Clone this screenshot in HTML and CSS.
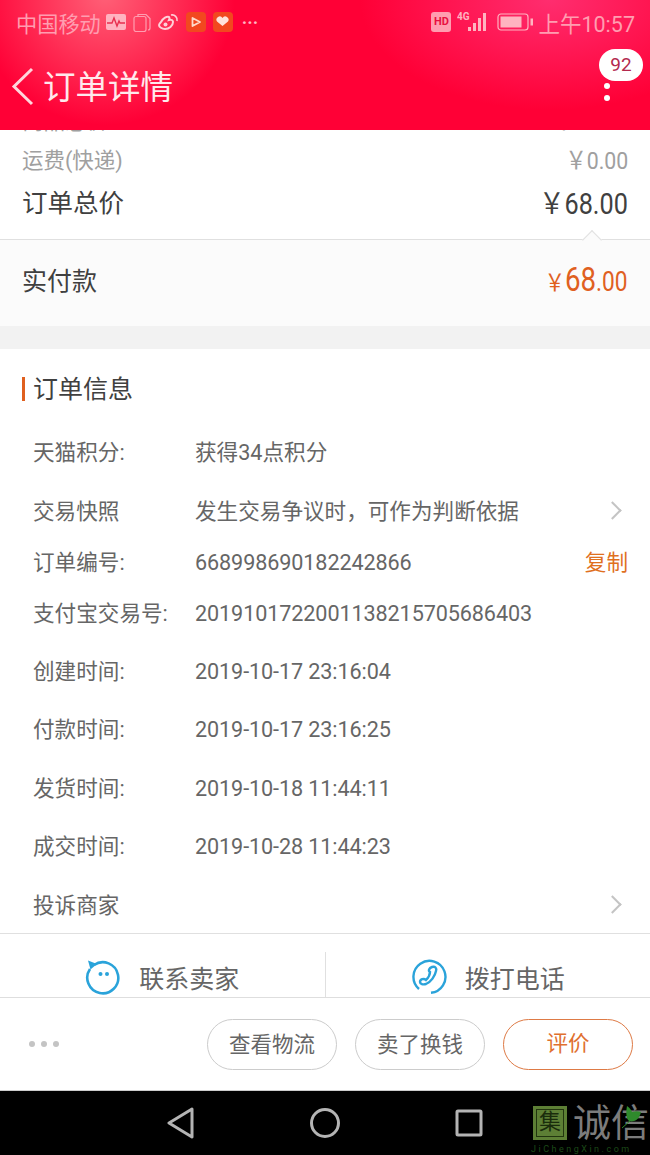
FILE: index.html
```html
<!DOCTYPE html>
<html lang="zh-CN">
<head>
<meta charset="UTF-8" />
<meta name="viewport" content="width=device-width, initial-scale=1" />
<title>订单详情</title>
<link rel="stylesheet" href="styles.css">
</head>
<body>
  <header class="top">
    <div class="status">
      <div class="status-left">
        <span>中国移动</span>
        <svg class="ico-pulse" width="20" height="16" viewBox="0 0 20 16"><rect width="20" height="16" rx="2" fill="#ffb3c0"/><path d="M1 9h5l2-5 3 8 2-5 1 2h5" fill="none" stroke="#e8304f" stroke-width="1.4"/></svg>
        <svg width="18" height="19" viewBox="0 0 18 19" fill="none" stroke="#ff9db0" stroke-width="1.2"><path d="M5 3V1.500h8l4 4V15a2 2 0 0 1-2 2"/><rect x="1" y="3.500" width="12" height="15" rx="2"/></svg>
        <svg width="21" height="18" viewBox="0 0 21 18" fill="none" stroke="#ffd0d8" stroke-width="2"><path d="M3 9c2-4 6-6 8-5 1 1 0 3 0 3s4-1 4 2c0 4-4 7-8 7-3 0-6-2-6-4 0-1 1-2 2-3z"/><circle cx="7.500" cy="11.500" r="2" fill="#ffd0d8" stroke="none"/><path d="M13 2a5 5 0 0 1 6 6" stroke-width="1.600"/></svg>
        <span class="app-badge"><svg width="12" height="12" viewBox="0 0 12 12" fill="none" stroke="#ffd9c9" stroke-width="1.800" stroke-linejoin="round"><path d="M2.500 2 10 6l-7.500 4z"/></svg></span>
        <span class="app-badge"><svg width="13" height="12" viewBox="0 0 13 12" fill="#ffe3dc"><path d="M6.500 10 1 5.500A3 3 0 0 1 6.500 2 3 3 0 0 1 12 5.500z"/></svg></span>
        <span class="more-dots">···</span>
      </div>
      <div class="status-right">
        <span class="hd">HD</span>
        <svg width="32" height="21" viewBox="0 0 32 21" fill="#ffb3c0"><text x="0" y="8" class="net-label">4G</text><rect x="11" y="15" width="3" height="4"/><rect x="16" y="11" width="3" height="8"/><rect x="21" y="6" width="3" height="13"/><rect x="26" y="1" width="3" height="18"/></svg>
        <svg class="battery" width="37" height="18" viewBox="0 0 37 18"><rect x="1" y="1" width="30" height="16" rx="3" fill="none" stroke="#ffb3c0" stroke-width="1.200"/><rect x="3.500" y="3.500" width="21" height="11" fill="#ffb3c0"/><rect x="33.500" y="5.500" width="2.500" height="7" fill="#ffb3c0"/></svg>
        <span class="clock">上午10:57</span>
      </div>
    </div>
    <div class="nav">
      <svg class="back" width="26" height="40" viewBox="0 0 26 40" fill="none" stroke="#ffd5dc" stroke-width="3"><path d="M21 2 3 19.500 21 37"/></svg>
      <h1>订单详情</h1>
      <div class="nav-more">
        <span class="count">92</span>
        <span class="dot"></span>
        <span class="dot"></span>
      </div>
    </div>
  </header>

  <main class="content">
    <section class="prices">
      <div class="row-minor row-clipped"><span>商品总价</span><span class="num">￥68.00</span></div>
      <div class="row-minor row-freight"><span>运费(快递)</span><span class="num">￥0.00</span></div>
      <div class="row-total"><span>订单总价</span><span class="num">￥68.00</span></div>
    </section>
    <section class="paid">
      <span class="notch"></span>
      <span>实付款</span>
      <span class="paid-sum"><small class="yen">￥</small>68<small>.00</small></span>
    </section>
    <div class="gap"></div>
    <section class="info">
      <h2>订单信息</h2>
      <div class="info-row h58"><span class="key">天猫积分:</span><span class="val">获得34点积分</span></div>
      <div class="info-row h58"><span class="key">交易快照</span><span class="val">发生交易争议时，可作为判断依据</span><span class="chev"></span></div>
      <div class="info-row h44"><span class="key">订单编号:</span><span class="val digits">668998690182242866</span><span class="copy">复制</span></div>
      <div class="info-row h58 up"><span class="key">支付宝交易号:</span><span class="val digits">2019101722001138215705686403</span></div>
      <div class="info-row h58"><span class="key">创建时间:</span><span class="val digits">2019-10-17 23:16:04</span></div>
      <div class="info-row h58"><span class="key">付款时间:</span><span class="val digits">2019-10-17 23:16:25</span></div>
      <div class="info-row h58"><span class="key">发货时间:</span><span class="val digits">2019-10-18 11:44:11</span></div>
      <div class="info-row h58"><span class="key">成交时间:</span><span class="val digits">2019-10-28 11:44:23</span></div>
      <div class="info-row h58"><span class="key">投诉商家</span><span class="chev"></span></div>
    </section>
    <section class="contact">
      <div class="contact-item">
        <svg width="36" height="36" viewBox="0 0 36 36" fill="none" stroke="#2aa3da" stroke-width="2.600"><path d="M9 6a15.500 15.500 0 1 1-4 4"/><path d="M3 1.500 12 5 5.500 10.500z" fill="#2aa3da" stroke="none"/><circle cx="15.500" cy="15" r="2" fill="#2aa3da" stroke="none"/><circle cx="22" cy="15" r="2" fill="#2aa3da" stroke="none"/></svg>
        <span>联系卖家</span>
      </div>
      <div class="contact-item">
        <svg width="36" height="36" viewBox="0 0 36 36" fill="none" stroke="#2aa3da" stroke-width="2.400"><path d="M8 30A16 16 0 1 1 20 33.800"/><path d="M21 8c3-1 5 1 4 4-1 5-5 11-10 13-3 1-6 0-6-2 0-3 4-4 6-2 2-2 4-5 4-8-2-1-1-4 2-5z"/></svg>
        <span>拨打电话</span>
      </div>
    </section>
  </main>

  <div class="actions">
    <span class="action-more"><i></i><i></i><i></i></span>
    <span class="btn">查看物流</span>
    <span class="btn">卖了换钱</span>
    <span class="btn btn-main">评价</span>
  </div>

  <footer class="sysnav">
    <svg width="28" height="32" viewBox="0 0 28 32" fill="none" stroke="#b4b4b4" stroke-width="3" stroke-linejoin="round"><path d="M25 2 2 16l23 14z"/></svg>
    <svg width="32" height="32" viewBox="0 0 32 32" fill="none" stroke="#b4b4b4" stroke-width="3"><circle cx="16" cy="16" r="13.500"/></svg>
    <svg width="28" height="28" viewBox="0 0 28 28" fill="none" stroke="#b4b4b4" stroke-width="3" stroke-linejoin="round"><rect x="2" y="2" width="24" height="24" rx="1"/></svg>
    <div class="mark">
      <div class="mark-top"><span class="mark-box"><span class="mark-inner">集</span></span><span class="mark-name">诚信</span></div>
      <div class="mark-url">JiChengXin.com</div>
      <svg class="mark-leaf" width="22" height="24" viewBox="0 0 22 24" fill="#2f8a2c"><path d="M6 1c3 2 4 4 5 6 3-1 6-1 9 0-1 4-3 8-7 9-3 1-5 0-6-1-2-3-2-9-1-14z"/><path d="M10 15 1 23" stroke="#2f8a2c" fill="none"/></svg>
    </div>
  </footer>
</body>
</html>
```

FILE: styles.css
```css
* {
  box-sizing: border-box;
}

html,
body {
  margin: 0;
  padding: 0;
}

body {
  width: 650px;
  height: 1155px;
  overflow: hidden;
  display: flex;
  flex-direction: column;
  background: #fff;
  color: #666;
  font-family: Roboto, "Noto Sans CJK SC", sans-serif;
}

/* Top bar */
.top {
  height: 130px;
  flex: none;
  position: relative;
  z-index: 2;
  color: #fff;
  background:
    radial-gradient(circle at 105px -5px, rgba(255, 120, 135, 0.8), rgba(255, 60, 90, 0) 130px),
    radial-gradient(ellipse 190px 110px at 550px 0, rgba(255, 60, 130, 0.75), rgba(255, 30, 90, 0) 100%),
    #ff0036;
}

.status {
  height: 44px;
  padding: 0 15px 0 16px;
  display: flex;
  justify-content: space-between;
  align-items: center;
  font-size: 21px;
  color: #ff9db0;
}

.status-left,
.status-right {
  display: flex;
  align-items: center;
}

.status-left {
  gap: 7px;
}

.status-left span:first-child {
  margin-right: -2px;
  font-size: 21.200px;
}

.app-badge {
  width: 20px;
  height: 20px;
  border-radius: 4px;
  background: #f2481f;
  display: flex;
  align-items: center;
  justify-content: center;
}

.more-dots {
  margin-left: 2px;
  font-size: 18px;
  font-weight: 700;
  color: #ffb3c0;
}

.status-right {
  gap: 8px;
}

.hd {
  width: 20px;
  height: 20px;
  margin-right: -2px;
  border-radius: 3px;
  background: #ff9db0;
  color: #e8103f;
  font-size: 11px;
  font-weight: 700;
  line-height: 20px;
  text-align: center;
}

.battery {
  margin-right: -4px;
}

.net-label {
  font-size: 10px;
  font-weight: 700;
}

.clock {
  font-size: 21.500px;
  color: #ff9db0;
}

.nav {
  height: 86px;
  padding: 0 0 0 11px;
  display: flex;
  align-items: center;
  position: relative;
}

h1 {
  margin: 2px 0 0 6px;
  font-size: 32.500px;
  font-weight: 400;
  line-height: 44px;
  color: #ffe9ec;
}

.nav-more {
  margin-left: auto;
  margin-right: 7px;
  width: 44px;
  height: 86px;
  display: flex;
  flex-direction: column;
  align-items: center;
  gap: 6px;
}

.count {
  width: 44px;
  height: 32px;
  margin-top: 5px;
  border-radius: 16px;
  background: #fff;
  color: #b3294e;
  font-size: 19px;
  line-height: 32px;
  text-align: center;
}

.dot {
  width: 6px;
  height: 6px;
  margin-right: 29px;
  border-radius: 50%;
  background: #fff;
}

.count + .dot {
  margin-top: -4px;
}

/* Scrolled content */
.content {
  flex: 1;
  min-height: 0;
  overflow: hidden;
  display: flex;
  flex-direction: column;
}

.prices {
  height: 109px;
  flex: none;
  padding: 0 22px;
}

.row-minor,
.row-total {
  display: flex;
  justify-content: space-between;
  align-items: center;
}

.row-minor {
  font-size: 21.500px;
  color: #a0a0a0;
}

.row-minor .num {
  font-size: 24.500px;
}

/* digits in the price rows are tall and narrow */
.num {
  display: inline-block;
  transform: scaleX(0.87);
  transform-origin: right center;
}

.row-clipped {
  margin-top: -23px;
  height: 24px;
}

.row-freight {
  height: 55px;
}

.row-total {
  height: 29px;
  font-size: 25.500px;
  color: #404040;
}

.row-total .num {
  font-size: 29px;
}

.paid {
  height: 87px;
  flex: none;
  padding: 0 22px 8px;
  display: flex;
  justify-content: space-between;
  align-items: center;
  position: relative;
  border-top: 1px solid #e0e0e0;
  background: #fbfbfb;
  font-size: 25px;
  color: #404040;
}

.notch {
  position: absolute;
  top: -7px;
  left: 585px;
  width: 14px;
  height: 14px;
  background: #fbfbfb;
  border-top: 1px solid #e0e0e0;
  border-left: 1px solid #e0e0e0;
  transform: rotate(45deg);
}

.paid-sum {
  display: inline-block;
  transform: scaleX(0.84);
  transform-origin: right center;
  font-size: 33px;
  color: #e0601f;
}

.paid-sum small {
  font-size: 27px;
}

.paid-sum .yen {
  font-size: 24px;
}

.gap {
  height: 23px;
  flex: none;
  background: #f2f2f2;
}

.info {
  flex: none;
  display: flex;
  flex-direction: column;
  border-bottom: 1px solid #e0e0e0;
  height: 585px;
}

h2 {
  height: 24px;
  margin: 28px 0 23px 22px;
  padding-left: 8px;
  border-left: 3px solid #e0601f;
  font-size: 25px;
  font-weight: 400;
  line-height: 26px;
  color: #404040;
}

.info-row {
  flex: none;
  padding: 0 22px 0 33px;
  display: flex;
  align-items: center;
  font-size: 21.600px;
  line-height: 30px;
  color: #666;
}

.h58 {
  height: 58.400px;
}

.h44 {
  height: 44px;
}

.up {
  height: 58px;
}

.key {
  width: 162px;
  flex: none;
  white-space: nowrap;
  color: #666;
}

.val {
  flex: 1;
  white-space: nowrap;
}

.digits {
  letter-spacing: -0.1px;
}

.key + .chev {
  margin-left: auto;
}

.chev {
  width: 13px;
  height: 13px;
  margin: -2px 9px 0 0;
  border-top: 2px solid #c4c4c4;
  border-right: 2px solid #c4c4c4;
  transform: rotate(45deg);
}

.copy {
  color: #e0701f;
}

.contact {
  height: 64px;
  flex: none;
  display: flex;
  overflow: hidden;
  border-bottom: 1px solid #dedede;
}

.contact-item {
  flex: 1;
  display: flex;
  align-items: center;
  justify-content: center;
  gap: 18px;
  margin-top: 18px;
  height: 46px;
  padding-top: 4px;
  font-size: 25px;
  color: #666;
}

.contact-item + .contact-item {
  border-left: 1px solid #e0e0e0;
}

/* Bottom actions */
.actions {
  height: 93px;
  flex: none;
  padding: 0 17px 0 29px;
  display: flex;
  align-items: center;
  gap: 18px;
  border-bottom: 1px solid #ccc;
}

.action-more {
  display: flex;
  gap: 6px;
  margin-right: auto;
}

.action-more i {
  width: 6px;
  height: 6px;
  border-radius: 50%;
  background: #c4c4c4;
}

.btn {
  width: 130px;
  height: 51px;
  border: 1px solid #ccc;
  border-radius: 26px;
  font-size: 21.500px;
  line-height: 49px;
  text-align: center;
  color: #666;
}

.btn-main {
  border: 1.500px solid #de7a45;
  line-height: 48px;
  color: #e0702f;
}

/* System nav */
.sysnav {
  height: 64px;
  flex: none;
  padding-left: 167px;
  display: flex;
  align-items: center;
  gap: 114px;
  position: relative;
  background: #000;
}

.mark {
  position: absolute;
  left: 533px;
  top: 15px;
  width: 117px;
}

.mark-top {
  display: flex;
  align-items: center;
  gap: 6px;
  height: 34px;
}

.mark-box {
  width: 34px;
  height: 34px;
  padding: 3px;
  background: #5d7f35;
}

.mark-inner {
  display: block;
  width: 28px;
  height: 28px;
  border: 1px solid #22350f;
  color: #1a2c0c;
  font-size: 22px;
  line-height: 24px;
  text-align: center;
}

.mark-name {
  font-size: 38px;
  line-height: 34px;
  font-weight: 400;
  color: #7c7c7c;
  white-space: nowrap;
}

.mark-url {
  margin: 4px 0 0 -2px;
  font-size: 9px;
  line-height: 10px;
  letter-spacing: 2.500px;
  color: #1c4a18;
  white-space: nowrap;
}

.mark-leaf {
  position: absolute;
  left: 88px;
  top: -1px;
}
```
